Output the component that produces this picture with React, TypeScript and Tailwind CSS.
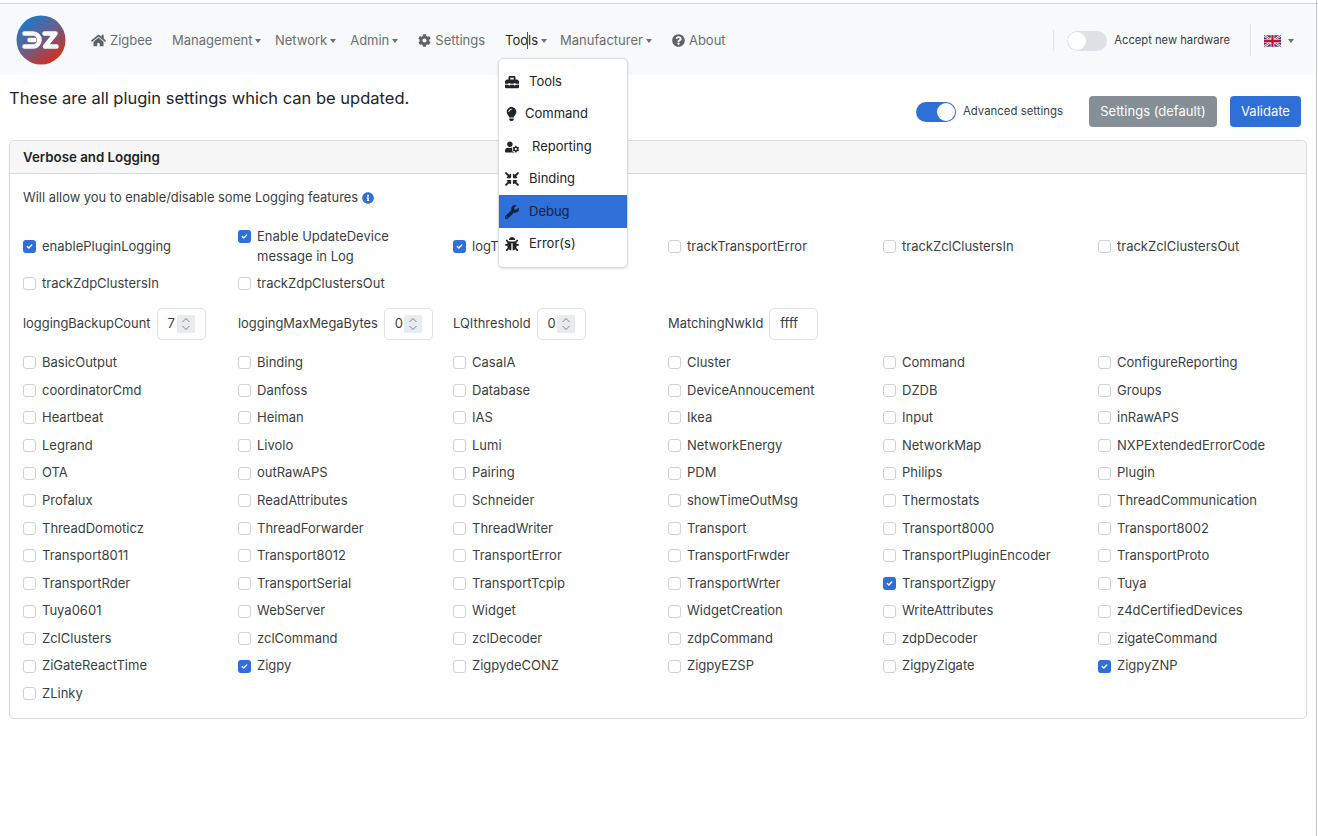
import {
  FaHome,
  FaCog,
  FaQuestionCircle,
  FaToolbox,
  FaLightbulb,
  FaUserCog,
  FaCompressArrowsAlt,
  FaWrench,
  FaBug,
  FaInfoCircle,
} from "react-icons/fa";

const checked = new Set(["TransportZigpy", "Zigpy", "ZigpyZNP"]);

const debugFlags = [
  "BasicOutput", "Binding", "CasaIA", "Cluster", "Command", "ConfigureReporting",
  "coordinatorCmd", "Danfoss", "Database", "DeviceAnnoucement", "DZDB", "Groups",
  "Heartbeat", "Heiman", "IAS", "Ikea", "Input", "inRawAPS",
  "Legrand", "Livolo", "Lumi", "NetworkEnergy", "NetworkMap", "NXPExtendedErrorCode",
  "OTA", "outRawAPS", "Pairing", "PDM", "Philips", "Plugin",
  "Profalux", "ReadAttributes", "Schneider", "showTimeOutMsg", "Thermostats", "ThreadCommunication",
  "ThreadDomoticz", "ThreadForwarder", "ThreadWriter", "Transport", "Transport8000", "Transport8002",
  "Transport8011", "Transport8012", "TransportError", "TransportFrwder", "TransportPluginEncoder", "TransportProto",
  "TransportRder", "TransportSerial", "TransportTcpip", "TransportWrter", "TransportZigpy", "Tuya",
  "Tuya0601", "WebServer", "Widget", "WidgetCreation", "WriteAttributes", "z4dCertifiedDevices",
  "ZclClusters", "zclCommand", "zclDecoder", "zdpCommand", "zdpDecoder", "zigateCommand",
  "ZiGateReactTime", "Zigpy", "ZigpydeCONZ", "ZigpyEZSP", "ZigpyZigate", "ZigpyZNP",
  "ZLinky",
];

function Caret() {
  return <span className="ml-[3px] inline-block h-0 w-0 border-x-[3.5px] border-t-[4px] border-x-transparent border-t-current" />;
}

function Check({ on }: { on?: boolean }) {
  if (on) {
    return (
      <span className="flex h-[13px] w-[13px] shrink-0 items-center justify-center rounded-[3px] bg-[#2f6fd8]">
        <svg width="9" height="9" viewBox="0 0 20 20">
          <path d="M5 10l3.5 3.5L15 6.5" fill="none" stroke="#fff" strokeWidth="3" strokeLinecap="round" strokeLinejoin="round" />
        </svg>
      </span>
    );
  }
  return <span className="h-[13px] w-[13px] shrink-0 rounded-[3px] border border-[#cfd2d6] bg-white" />;
}

function Flag({ label, on }: { label: string; on?: boolean }) {
  return (
    <div className="flex h-[27.6px] items-center gap-[6px] text-[#3b3f44]">
      <Check on={on} />
      <span>{label}</span>
    </div>
  );
}

function NumberField({ label, value, spin = true }: { label: string; value: string; spin?: boolean }) {
  return (
    <div className="flex items-center gap-[6px] text-[#3b3f44]">
      <span className="text-[12.9px]">{label}</span>
      <div className="flex h-[32px] w-[49px] items-center rounded-[5px] border border-[#dee2e6] bg-white pl-[10px]">
        <span className="w-[10px]">{value}</span>
        {spin && (
          <span className="ml-[-0.5px] flex h-[18px] w-[18px] items-center justify-center bg-[#e9ecef]">
            <svg width="10" height="14" viewBox="0 0 10 14">
              <path d="M1.5 5L5 1.5 8.5 5M1.5 9L5 12.5 8.5 9" fill="none" stroke="#7d8288" strokeWidth="1" />
            </svg>
          </span>
        )}
      </div>
    </div>
  );
}

function Logo() {
  return (
    <svg width="50" height="50" viewBox="0 0 50 50" className="mb-[2px] shrink-0">
      <defs>
        <linearGradient id="dz" x1="0.2" y1="0.1" x2="0.8" y2="0.9">
          <stop offset="0" stopColor="#1f78c8" />
          <stop offset="0.5" stopColor="#6d5d85" />
          <stop offset="1" stopColor="#d0301f" />
        </linearGradient>
      </defs>
      <circle cx="25" cy="25" r="24.5" fill="url(#dz)" />
      <path d="M8.5 18.5h8.5a6.5 6.5 0 0 1 0 13H8.5M13.5 25h5" fill="none" stroke="#fff" strokeWidth="4.5" strokeLinecap="round" />
      <path d="M28.5 18.5h11L29 31.5h11.5" fill="none" stroke="#fff" strokeWidth="4.5" strokeLinecap="round" strokeLinejoin="round" />
    </svg>
  );
}

function UkFlag() {
  return (
    <svg width="17" height="12" viewBox="0 0 60 40">
      <rect width="60" height="40" fill="#2b3f86" />
      <path d="M0 0l60 40M60 0L0 40" stroke="#fff" strokeWidth="8" />
      <path d="M0 0l60 40M60 0L0 40" stroke="#c8102e" strokeWidth="3" />
      <path d="M30 0v40M0 20h60" stroke="#fff" strokeWidth="13" />
      <path d="M30 0v40M0 20h60" stroke="#c8102e" strokeWidth="8" />
    </svg>
  );
}

function Navbar() {
  return (
    <nav className="flex h-[71px] items-center bg-[#f8f9fa] pl-[16px] pr-[24px] pt-[2px] text-[13px] text-[#6b6f74]">
      <Logo />
      <FaHome className="ml-[25px] h-[15px] w-[15px] text-[#5f6368]" />
      <span className="ml-[4px]">Zigbee</span>
      <span className="ml-[19.5px]">Management</span>
      <Caret />
      <span className="ml-[13.5px]">Network</span>
      <Caret />
      <span className="ml-[14px]">Admin</span>
      <Caret />
      <FaCog className="ml-[20px] h-[13px] w-[13px] text-[#5f6368]" />
      <span className="ml-[4px]">Settings</span>
      <span className="relative ml-[20px] text-[#26292c]">
        Tools
        <span className="absolute left-[22px] top-[1px] h-[17px] w-px bg-[#555]" />
      </span>
      <Caret />
      <span className="ml-[13px]">Manufacturer</span>
      <Caret />
      <FaQuestionCircle className="ml-[20px] h-[13px] w-[13px] text-[#5f6368]" />
      <span className="ml-[4px]">About</span>
      <div className="ml-auto flex items-center">
        <span className="h-[21px] w-px bg-[#e3e5e8]" />
        <span className="ml-[13px] flex h-[20px] w-[40px] items-center rounded-full bg-[#dee2e6] pl-[1px]">
          <span className="h-[18px] w-[18px] rounded-full bg-white" />
        </span>
        <span className="ml-[7px] text-[11.2px] text-[#3b3f44]">Accept new hardware</span>
        <span className="ml-[20px] mb-[2px] h-[32px] w-px bg-[#e3e5e8]" />
        <span className="ml-[13px] flex items-center">
          <UkFlag />
          <span className="ml-[4px] flex">
            <Caret />
          </span>
        </span>
      </div>
    </nav>
  );
}

const toolsMenu = [
  { label: "Tools", icon: FaToolbox, gap: "ml-[10px]" },
  { label: "Command", icon: FaLightbulb, gap: "ml-[7px]" },
  { label: "Reporting", icon: FaUserCog, gap: "ml-[13px]" },
  { label: "Binding", icon: FaCompressArrowsAlt, gap: "ml-[10px]" },
  { label: "Debug", icon: FaWrench, gap: "ml-[10px]", active: true },
  { label: "Error(s)", icon: FaBug, gap: "ml-[10px]" },
];

function ToolsDropdown() {
  return (
    <div className="absolute left-[498px] top-[58px] z-10 w-[130px] rounded-[5px] border border-[#d9dbde] bg-white py-[6.3px] text-[13px] text-[#212529] shadow-sm">
      {toolsMenu.map((item) => {
        const Icon = item.icon;
        return (
          <div
            key={item.label}
            className={`flex h-[32.5px] items-center pl-[6px] ${item.active ? "bg-[#2f6fd8] text-[#10243f]" : ""}`}
          >
            <Icon className={item.label === "Command" ? "h-[14px] w-[13px]" : "h-[14px] w-[14px]"} />
            <span className={item.gap}>{item.label}</span>
          </div>
        );
      })}
    </div>
  );
}

export default function App() {
  return (
    <div className="relative h-[836px] w-[1318px] overflow-hidden bg-white font-['Inter','Liberation_Sans',sans-serif] text-[13px]">
      <div className="mt-[3px] border-t border-[#d4d5d7]">
        <Navbar />
      </div>
      <ToolsDropdown />
      <span className="absolute bottom-0 right-[1px] top-0 w-px bg-[#c8c8c8]" />

      <div className="flex items-start pl-[9px] pr-[17px]">
        <h1 className="mt-[11px] text-[16.5px] leading-[24px] text-[#212529]">These are all plugin settings which can be updated.</h1>
        <div className="ml-auto mt-[21px] flex items-center">
          <span className="flex h-[20px] w-[40px] items-center justify-end rounded-full bg-[#2f6fd8] pr-[1px]">
            <span className="h-[18px] w-[18px] rounded-full bg-white" />
          </span>
          <span className="ml-[7px] text-[11.4px] text-[#3b3f44]">Advanced settings</span>
          <button className="ml-[26px] h-[31px] w-[128px] rounded-[4px] bg-[#868e96] text-[13px] text-white">Settings (default)</button>
          <button className="ml-[13px] h-[31px] w-[71px] rounded-[4px] bg-[#2f6fd8] text-[13px] text-white">Validate</button>
        </div>
      </div>

      <section className="ml-[9px] mt-[13px] w-[1298px] rounded-[5px] border border-[#d8dadc]">
        <header className="flex h-[33px] items-center rounded-t-[5px] border-b border-[#d8dadc] bg-[#f7f7f7] pl-[13px] pt-[1px] text-[13.3px] font-semibold text-[#212529]">
          Verbose and Logging
        </header>
        <div className="pb-[10px] pl-[13px] pt-[14px]">
          <p className="flex h-[20px] items-center text-[12.9px] text-[#3b3f44]">
            Will allow you to enable/disable some Logging features
            <FaInfoCircle className="ml-[4px] h-[12px] w-[12px] text-[#2f6fd8]" />
          </p>

          <div className="mt-[15px] grid grid-cols-[repeat(6,215px)] items-center">
            <Flag label="enablePluginLogging" on />
            <div className="flex h-[47px] gap-[6px] py-[4px] leading-[19.5px] text-[#3b3f44]">
              <span className="mt-[3px]"><Check on /></span>
              <span>Enable UpdateDevice<br />message in Log</span>
            </div>
            <Flag label="logTransportError" on />
            <Flag label="trackTransportError" />
            <Flag label="trackZclClustersIn" />
            <Flag label="trackZclClustersOut" />
            <Flag label="trackZdpClustersIn" />
            <Flag label="trackZdpClustersOut" />
          </div>

          <div className="mt-[10px] grid grid-cols-[repeat(6,215px)] items-center">
            <NumberField label="loggingBackupCount" value="7" />
            <NumberField label="loggingMaxMegaBytes" value="0" />
            <NumberField label="LQIthreshold" value="0" />
            <NumberField label="MatchingNwkId" value="ffff" spin={false} />
          </div>

          <div className="mt-[9.3px] grid grid-cols-[repeat(6,215px)]">
            {debugFlags.map((f) => (
              <Flag key={f} label={f} on={checked.has(f)} />
            ))}
          </div>
        </div>
      </section>
    </div>
  );
}
